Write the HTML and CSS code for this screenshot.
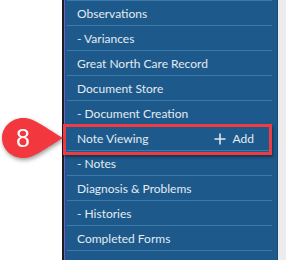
FILE: index.html
```html
<!DOCTYPE html>
<html>
<head>
    <meta charset="utf-8" />
    <title>Menu - Note Viewing</title>
    <link rel="stylesheet" href="styles.css">
</head>
<body>

<div class="page">
    <!-- left margin with the step badge -->
    <div class="gutter"></div>

    <!-- navigation panel -->
    <div class="nav-panel">
        <ul class="nav-list">
            <li class="nav-item">Observations</li>
            <li class="nav-item">- Variances</li>
            <li class="nav-item">Great North Care Record</li>
            <li class="nav-item">Document Store</li>
            <li class="nav-item">- Document Creation</li>
            <li class="nav-item">
                <span>Note Viewing</span>
                <span class="nav-add">
                    <svg class="nav-add-icon" width="12" height="12" viewBox="0 0 12 12">
                        <path d="M6 0.5V11.5M0.5 6H11.5" stroke="#dfe7ef" stroke-width="1.6" fill="none"/>
                    </svg>
                    Add
                </span>
            </li>
            <li class="nav-item">- Notes</li>
            <li class="nav-item">Diagnosis &amp; Problems</li>
            <li class="nav-item">- Histories</li>
            <li class="nav-item">Completed Forms</li>
            <li class="nav-item"></li>
        </ul>
    </div>
    <div class="scroll-edge"></div>
</div>

<!-- callout annotations -->
<div class="highlight-box"></div>
<div class="step-badge">
    <svg width="64" height="46" viewBox="0 0 64 46">
        <path d="M23 2 C34 2 41 9 63 22 C41 35 34 42 23 42 C11.5 42 2 33 2 22 C2 11 11.5 2 23 2 Z" fill="#f2373e"/>
    </svg>
    <span class="step-num">8</span>
</div>

</body>
</html>
```

FILE: styles.css
```css
body{
    margin: 0px;padding: 0px;background: #fff;
    font-family: Lato, "Noto Sans", sans-serif;font-size: 12px;
    overflow: hidden;
}

.page{
    display: flex;
    height: 260px;overflow: hidden;
}

.gutter{
    width: 62px;flex: none;
    background: #fff;
}

/*panel with dark and purple edge*/
.nav-panel{
    width: 205px;flex: none;
    background: #1d5a8b;
    border-left: 2px solid #1c1c22;
    box-shadow: inset 1px 0 0 #7060c8;
    padding: 0px 5px 0px 3px;
}

.scroll-edge{
    flex: 1;
    border-left: 1px solid #174b77;
    background: #ececec;
}

.nav-list{
    list-style: none;
    margin: 0px;padding: 0px;
}

.nav-item{
    height: 23px;line-height: 23px;
    border-top: 1px solid #3d7aac;
    padding: 1px 18px 0px 10px;
    color: #e3eaf2;
    display: flex;justify-content: space-between;align-items: center;
    white-space: nowrap;
}

.nav-add{
    display: flex;align-items: center;gap: 7px;
}

/*red outline round the current row*/
.highlight-box{
    position: absolute;
    left: 63px;top: 124px;
    width: 203px;height: 25px;
    border: 3px solid #ef3b42;
    box-shadow: 1px 2px 3px rgba(0,0,0,0.45);
}

.step-badge{
    position: absolute;
    left: 0px;top: 116px;
    width: 64px;height: 46px;
    filter: drop-shadow(1px 2px 2px rgba(0,0,0,0.4));
}
.step-badge svg{display: block;}

.step-num{
    position: absolute;
    left: 2px;top: 2px;width: 42px;
    text-align: center;
    line-height: 40px;
    color: #fff;font-size: 25px;
    font-family: "Liberation Sans", Arial, sans-serif;
}
```
